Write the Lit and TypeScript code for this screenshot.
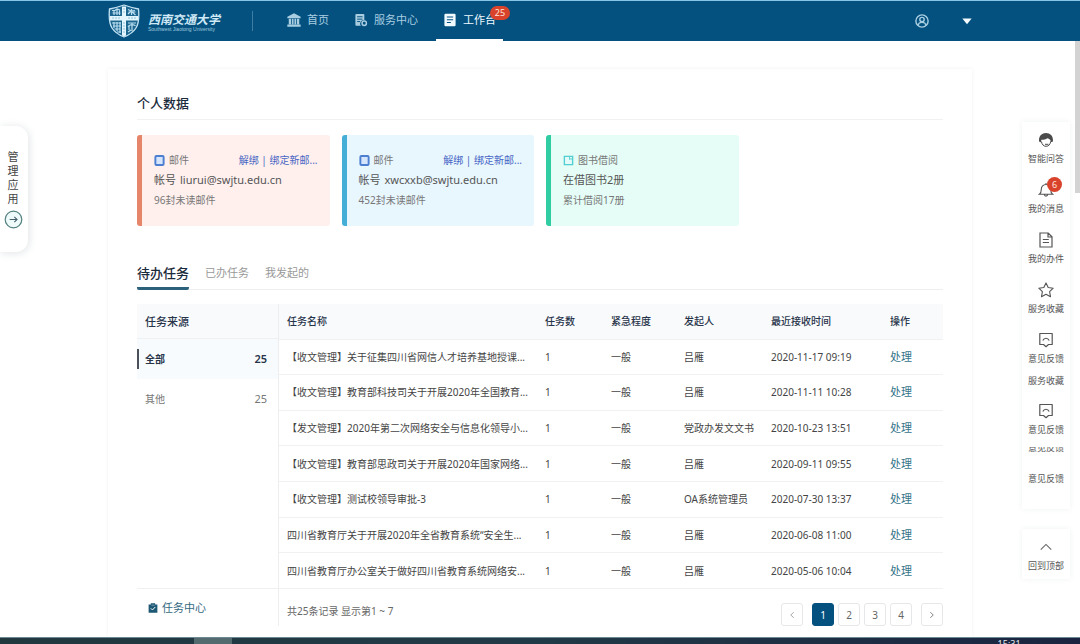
import { LitElement, html, css, svg } from "lit";
import { customElement, property, state } from "lit/decorators.js";
import { classMap } from "lit/directives/class-map.js";

const icons: Record<string, unknown> = {
  bank: svg`<g fill="currentColor"><path d="M8 .3 15.600 4.400V6H.4V4.400z"/><path d="M2 6.500h2.600v6.300H2zM5.500 6.500h2v6.300h-2zM8.500 6.500h2v6.300h-2zM11.400 6.500H14v6.300h-2.600zM.4 13.200h15.200v2.400H.4z"/></g>`,
  service: svg`<path fill="currentColor" d="M2.600 1h8.200q1 0 1 1v6.200a4 4 0 0 0-4 6.300H2.600q-1 0-1-1V2q0-1 1-1z"/><path stroke="#04517f" stroke-width="1.100" d="M3.600 4.300h6.200M3.600 7h6M3.600 9.800h3.400"/><circle cx="11.700" cy="11.700" r="2.500" fill="none" stroke="currentColor" stroke-width="1.700"/>`,
  desk: svg`<path fill="currentColor" d="M3 .8h10q1.400 0 1.400 1.400v11.600q0 1.400-1.400 1.400H3q-1.400 0-1.400-1.400V2.200Q1.600.8 3 .8z"/><path stroke="#04517f" stroke-width="1.200" d="M4.400 4.600h7.200M4.400 7.600h7.200M4.400 10.800h4.600"/>`,
  user: svg`<g fill="none" stroke="currentColor" stroke-width="1.600"><circle cx="8" cy="8" r="7"/><circle cx="8" cy="6.300" r="2.500"/><path d="M3.700 13.200c0-2.600 1.700-3.600 4.300-3.600s4.300 1 4.300 3.600"/></g>`,
  caret: svg`<path fill="currentColor" d="M.5 4h15L8 13z"/>`,
  mail: svg`<rect x="2" y="1.500" width="12" height="13" rx="1.500" fill="#d5e6fc" stroke="#4c7fd0" stroke-width="2.800"/>`,
  book: svg`<path d="M2 2h12v12H2z" fill="#e4fbfa" stroke="#52cfd0" stroke-width="2"/><path d="M9.500 2.500v4.200l2-1.400 2 1.400" fill="none" stroke="#52cfd0" stroke-width="1.300"/>`,
  arrow: svg`<circle cx="8" cy="8" r="7" fill="#effafa" stroke="#52807f" stroke-width="1"/><path d="M4.800 8h6M8.700 5.800 11 8l-2.300 2.200" fill="none" stroke="#44606a" stroke-width=".9"/>`,
  robot: svg`<path fill="#4b4b4b" d="M1 8.600C.8 3.700 4 .9 8 .9s7.200 2.800 7 7.700c-.1 1.400-1.200 1.800-2 1.300-.4-2-1.600-3.100-3.600-3.700-1.700 1.100-4 1.700-6 1.600l-.5 2.300C2 10.600 1.100 10 1 8.600z"/><path fill="none" stroke="#4b4b4b" stroke-width="1" d="M3.400 9.500c.5 3 2.200 4.800 4.600 4.800 2.600 0 4.400-1.900 4.700-5M7 12.300h3.400"/>`,
  bell: svg`<path fill="none" stroke="#555" stroke-width="1.100" d="M1.400 12.300h13.200c-1.500-1-1.900-2.300-1.900-5C12.700 4.500 10.800 2.500 8 2.500S3.300 4.500 3.300 7.300c0 2.700-.4 4-1.900 5zM6.300 12.500c.2 2.200 3.200 2.200 3.400 0M8 2.500V1"/>`,
  doc: svg`<path fill="none" stroke="#555" stroke-width="1.200" d="M2 1h8.200L14 4.800V15H2zM10 1v4h4M4.800 7.500h6M4.800 10.500h6.200"/>`,
  star: svg`<path fill="none" stroke="#555" stroke-width="1.100" stroke-linejoin="round" d="m8 .9 2.200 4.600 5 .7-3.600 3.500.9 5L8 12.300l-4.500 2.400.9-5L.8 6.200l5-.7z"/>`,
  feedback: svg`<path fill="none" stroke="#555" stroke-width="1.200" stroke-linejoin="round" d="M1.800 1.500h12.400v11h-3.700L8 14.700l-2.500-2.200H1.800zM4.800 8.500c1.500-3 4.900-3 6.400 0"/>`,
  up: svg`<path fill="none" stroke="#666" stroke-width="1.200" d="m2 11 6-6 6 6"/>`,
  clip: svg`<path fill="#1d5874" d="M1 2.500h3.500V.5h7v2H15v13H1z"/><path fill="none" stroke="#fff" stroke-width="1.600" d="m4.500 8.500 2.600 2.600 4.600-4.800"/><path stroke="#b8ccd6" stroke-width="1" d="M5.500 3.500h5"/>`,
  prev: svg`<path fill="none" stroke="#aaa" stroke-width="2" d="m11.500 2.500-6 5.500 6 5.500"/>`,
  next: svg`<path fill="none" stroke="#888" stroke-width="2" d="m4.500 2.500 6 5.500-6 5.500"/>`,
};

@customElement("ui-icon")
class UiIcon extends LitElement {
  static styles = css`
    :host { display: inline-flex; flex: none; width: 14px; height: 14px; }
    svg { display: block; width: 100%; height: 100%; }
  `;
  @property() name = "";
  render() {
    return html`<svg viewBox="0 0 16 16" aria-hidden="true">${icons[this.name]}</svg>`;
  }
}

@customElement("school-crest")
class SchoolCrest extends LitElement {
  static styles = css`
    :host { display: block; width: 32px; height: 34px; }
    svg { display: block; width: 100%; height: 100%; }
  `;
  render() {
    return html`<svg viewBox="0 0 32 34" aria-hidden="true">
      <path d="M1.500 5Q9 3.500 16 1q7 2.500 14.500 4c.8 8.500.5 14-2.500 19-2.500 4-7 7-12 9-5-2-9.500-5-12-9C1 19 .7 13.500 1.500 5z" fill="#1c6690" stroke="#c4e4f4" stroke-width="1.300"/>
      <path d="M14 2.500h4V12h12v4.500H18v15l-2 1-2-1v-15H2V12h12z" fill="#e3f5fc"/>
      <g fill="none" stroke="#b9def0" stroke-width="1.200">
        <path d="M4 6.500h3l2-1.500 3 1M4.500 9h8M6 6.500V11M9 5.500V11M11.500 6.500V11"/>
        <path d="M20 5.500l3 1.500 4-.5M20 10l3-3 4.500 4M20.500 8h7M23.500 5v6"/>
        <path d="M4 19h9M5 22h8M6.500 25h6M9 28h4M6 18v6M9 18v9M12 18v11"/>
        <path d="M20 19h8M24 19v8M20 23c2-3 6-3 7.500-1M20 28l3-2M21 21v5"/>
      </g>
      <path d="M4 14h8M20 14h8M16 4v6M16 18v11" stroke="#8fbfd8" stroke-width="1" stroke-dasharray="2 1"/>
    </svg>`;
  }
}

const cards = [
  { tone: "coral", icon: "mail", kind: "邮件", links: true, label: "帐号", account: "liurui@swjtu.edu.cn", note: "96封未读邮件" },
  { tone: "blue", icon: "mail", kind: "邮件", links: true, label: "帐号", account: "xwcxxb@swjtu.edu.cn", note: "452封未读邮件" },
  { tone: "green", icon: "book", kind: "图书借阅", links: false, label: "在借图书2册", account: "", note: "累计借阅17册" },
];

const tasks = [
  ["【收文管理】关于征集四川省网信人才培养基地授课...", "吕雁", "2020-11-17 09:19"],
  ["【收文管理】教育部科技司关于开展2020年全国教育...", "吕雁", "2020-11-11 10:28"],
  ["【发文管理】2020年第二次网络安全与信息化领导小...", "党政办发文文书", "2020-10-23 13:51"],
  ["【收文管理】教育部思政司关于开展2020年国家网络...", "吕雁", "2020-09-11 09:55"],
  ["【收文管理】测试校领导审批-3", "OA系统管理员", "2020-07-30 13:37"],
  ["四川省教育厅关于开展2020年全省教育系统“安全生...", "吕雁", "2020-06-08 11:00"],
  ["四川省教育厅办公室关于做好四川省教育系统网络安...", "吕雁", "2020-05-06 10:04"],
];

const tools = [
  ["robot", "智能问答", ""],
  ["bell", "我的消息", "6"],
  ["doc", "我的办件", ""],
  ["star", "服务收藏", ""],
  ["feedback", "意见反馈", ""],
];

@customElement("app-root")
class AppRoot extends LitElement {
  static styles = css`
    :host {
      display: flex; flex-direction: column; position: relative;
      height: 100vh; overflow: hidden; background: #fff; color: #444;
      font: 10px/20px "Noto Sans", "Noto Sans CJK SC", sans-serif;
    }
    * { box-sizing: border-box; }
    a { color: inherit; text-decoration: none; }
    button { font: inherit; color: inherit; background: none; border: 0; padding: 0; cursor: pointer; }
    h2, ul, p { margin: 0; padding: 0; list-style: none; font-weight: inherit; }

    .top {
      flex: none; display: flex; align-items: center; height: 41px; padding: 0 10%;
      background: #04517f; border-top: 1px solid #86c5e6; color: #a9cee2;
    }
    .brand { display: flex; align-items: center; gap: 8px; padding-right: 32px; }
    .names { display: flex; flex-direction: column; color: #cfe9f6; white-space: nowrap; }
    .school { font: italic 700 12px/15px "Noto Sans CJK SC", sans-serif; }
    .english { font: 5px/6px "Liberation Sans", sans-serif; color: #9fc9df; }
    .rule { width: 1px; height: 20px; background: #3c7ea4; }
    .nav { display: flex; gap: 11px; height: 100%; margin-left: 27px; flex: 1; }
    .nav a {
      display: flex; align-items: center; gap: 6px; padding: 0 7px; font-size: 11px;
      border-bottom: 2px solid transparent; position: relative; white-space: nowrap;
    }
    .nav a.on { color: #f0faff; border-bottom-color: #fff; }
    .badge {
      position: absolute; display: flex; align-items: center; justify-content: center;
      background: #d9432c; color: #ffe3dc; border-radius: 8px;
    }
    .nav .badge { left: 54px; top: 5px; width: 20px; height: 14px; font-size: 9px; }
    .account { display: flex; align-items: center; gap: 33px; }
    .account button { display: flex; }
    .caret { width: 10px; height: 10px; color: #f4fcff; }

    .page { flex: 1; min-height: 0; overflow: hidden; padding: 28px 10% 0; }
    .panel { min-height: 100%; padding: 24px 29px 0; box-shadow: 0 0 4px #f0f1f3; }
    .title {
      font-size: 13px; font-weight: 500; color: #1c2b3c; padding-bottom: 6px;
      border-bottom: 1px solid #f0f1f2; font-family: "Noto Sans CJK SC", sans-serif;
    }
    .cards { display: grid; grid-template-columns: repeat(4, 1fr); gap: 12px; margin-top: 15px; }
    .card { padding: 15px 12px 16px; border-left: 5px solid; border-radius: 3px; min-width: 0; color: #777; }
    .card.coral { border-color: #e58569; background: #fff0ed; }
    .card.blue { border-color: #45aed6; background: #e8f6fe; }
    .card.green { border-color: #30cda2; background: #e5fdf6; }
    .head { display: flex; align-items: center; gap: 4px; }
    .head ui-icon { width: 11px; height: 11px; }
    .links { margin-left: auto; color: #4665c4; }
    .main { display: flex; gap: 4px; font-size: 11px; color: #555; white-space: nowrap; }

    .tabs { display: flex; align-items: stretch; gap: 16px; margin-top: 32px; border-bottom: 1px solid #eceeef; }
    .tabs button { font-size: 11px; line-height: 30px; height: 32px; color: #999; border-bottom: 3px solid transparent; margin-bottom: -1px; }
    .tabs button.on { font-size: 13px; font-weight: 500; color: #1c2b3c; border-bottom-color: #2c617c; border-radius: 2px; font-family: "Noto Sans CJK SC", sans-serif; }

    .board { display: grid; grid-template-columns: 142px minmax(0, 1fr); margin-top: 14px; }
    .sources { display: flex; flex-direction: column; border-right: 1px solid #eceef0; }
    .strong { font-family: "Noto Sans CJK SC", sans-serif; font-weight: 500; color: #28344a; }
    .sources .strong { font-size: 11px; line-height: 34px; padding-left: 8px; background: #f8fafc; border-bottom: 1px solid #eef0f2; }
    .source { display: flex; justify-content: space-between; align-items: center; height: 40px; padding: 0 11px 0 8px; color: #777; width: 100%; }
    .source span:last-child { font-size: 11px; }
    .source.on { position: relative; background: #f8fbfd; font-weight: 600; color: #28344a; }
    .source.on::before { content: ""; position: absolute; left: 0; top: 10px; width: 2px; height: 20px; background: #4a5158; }
    .center { display: flex; align-items: center; gap: 4px; margin-top: auto; height: 38px; padding-left: 11px; border-top: 1px solid #eef0f1; font-size: 11px; color: #34697f; }
    .center ui-icon { width: 10px; height: 10px; }

    table { width: 100%; height: 285px; table-layout: fixed; border-collapse: collapse; }
    th, td { padding: 0 0 0 8px; text-align: left; border-bottom: 1px solid #f0f1f3; white-space: nowrap; font-weight: 400; }
    th { height: 35px; background: #f8fafc; }
    th.strong { font-weight: 500; }
    .count { width: 66px; } .level { width: 73px; } .from { width: 87px; } .time { width: 119px; } .act { width: 61px; }
    .act a { font-size: 11px; color: #35758a; }
    .foot { display: flex; align-items: center; justify-content: space-between; padding: 14px 0 0 8px; color: #666; }
    .foot p { margin-top: -8px; }
    .pager { display: flex; gap: 4px; }
    .pager button { display: flex; align-items: center; justify-content: center; width: 22px; height: 23px; border: 1px solid #e6e7e9; border-radius: 3px; background: #fff; color: #666; }
    .pager ui-icon { width: 8px; height: 8px; }
    .pager .prev { margin-right: 5px; }
    .pager .next { margin-left: 5px; }
    .pager .on { background: #04517f; border-color: #04517f; color: #fff; }

    .drawer {
      position: absolute; left: 0; top: 126px; width: 28px; padding: 24px 2px 23px 0;
      display: flex; flex-direction: column; align-items: center; gap: 4px;
      background: #fff; border-radius: 0 12px 12px 0; box-shadow: 1px 1px 8px #dfe3e6;
      font-size: 11px; line-height: 14px; color: #444;
    }
    .drawer span { width: 11px; white-space: normal; word-break: break-all; }
    .drawer ui-icon { width: 19px; height: 19px; }
    .rail { position: absolute; right: 10px; top: 122px; width: 48px; display: flex; flex-direction: column; font-size: 9px; line-height: 12px; color: #555; }
    .group { padding-bottom: 18px; box-shadow: 0 0 6px #eff1f2; background: #fff; display: flex; flex-direction: column; }
    .tool { position: relative; display: flex; flex-direction: column; align-items: center; gap: 5px; width: 100%; height: 50px; padding-top: 10px; white-space: nowrap; }
    .tool ui-icon { width: 16px; height: 16px; }
    .tool .badge { left: 25px; top: 5px; width: 15px; height: 15px; font-size: 9px; }
    .echo { display: flex; justify-content: center; padding: 3px 0 6px; }
    .sliver { display: flex; align-items: flex-end; justify-content: center; height: 7px; margin: 4px 0 16px; overflow: hidden; }
    .back { margin-top: 20px; background: #fff; box-shadow: 0 0 6px #eff1f2; }
    .back ui-icon { width: 14px; }
    .scroll { position: absolute; right: 0; top: 41px; width: 5px; height: 152px; background: #d3d3d3; }
    .taskbar {
      flex: none; display: flex; justify-content: space-between; height: 7px; padding: 0 5.5% 0 18%;
      overflow: hidden; border-top: 1px solid #6d8a92; color: #e6eaf2; font-size: 9px; line-height: 12px;
      background: linear-gradient(90deg, #21383f, #213a47 50%, #1a2440);
    }
    .window { width: 38px; background: #536a6e; }
  `;

  @state() private tab = 0;
  @state() private source = 0;
  @state() private current = 1;

  private tool(icon: string, label: string, count = "") {
    return html`<button class="tool"><ui-icon name=${icon}></ui-icon><span>${label}</span>${count ? html`<span class="badge">${count}</span>` : ""}</button>`;
  }

  render() {
    return html`
      <header class="top">
        <div class="brand">
          <school-crest></school-crest>
          <div class="names"><span class="school">西南交通大学</span><span class="english">Southwest Jiaotong University</span></div>
        </div>
        <div class="rule"></div>
        <nav class="nav">
          <a href="#home"><ui-icon name="bank"></ui-icon>首页</a>
          <a href="#service"><ui-icon name="service"></ui-icon>服务中心</a>
          <a href="#desk" class="on"><ui-icon name="desk"></ui-icon>工作台<span class="badge">25</span></a>
        </nav>
        <div class="account">
          <button aria-label="用户"><ui-icon name="user"></ui-icon></button>
          <button aria-label="菜单"><ui-icon class="caret" name="caret"></ui-icon></button>
        </div>
      </header>

      <main class="page">
        <div class="panel">
          <h2 class="title">个人数据</h2>
          <section class="cards">
            ${cards.map((c) => html`
              <article class="card ${c.tone}">
                <div class="head"><ui-icon name=${c.icon}></ui-icon><span>${c.kind}</span>
                  ${c.links ? html`<span class="links"><a href="#unbind">解绑</a> | <a href="#bind">绑定新邮...</a></span>` : ""}
                </div>
                <p class="main"><span>${c.label}</span><span>${c.account}</span></p>
                <p>${c.note}</p>
              </article>`)}
          </section>

          <nav class="tabs">
            ${["待办任务", "已办任务", "我发起的"].map((t, i) => html`
              <button class=${classMap({ on: i === this.tab })} @click=${() => (this.tab = i)}>${t}</button>`)}
          </nav>

          <section class="board">
            <div class="sources">
              <div class="strong">任务来源</div>
              ${["全部", "其他"].map((s, i) => html`
                <button class=${classMap({ source: true, on: i === this.source })} @click=${() => (this.source = i)}><span>${s}</span><span>25</span></button>`)}
              <a class="center" href="#tasks"><ui-icon name="clip"></ui-icon>任务中心</a>
            </div>
            <div>
              <table>
                <thead><tr>
                  <th class="strong">任务名称</th><th class="strong count">任务数</th><th class="strong level">紧急程度</th>
                  <th class="strong from">发起人</th><th class="strong time">最近接收时间</th><th class="strong act">操作</th>
                </tr></thead>
                <tbody>
                  ${tasks.map(([name, from, time]) => html`
                    <tr><td>${name}</td><td>1</td><td>一般</td><td>${from}</td><td>${time}</td><td class="act"><a href="#handle">处理</a></td></tr>`)}
                </tbody>
              </table>
              <div class="foot">
                <p>共25条记录 显示第1 ~ 7</p>
                <div class="pager">
                  <button class="prev" aria-label="上一页" @click=${() => (this.current = Math.max(1, this.current - 1))}><ui-icon name="prev"></ui-icon></button>
                  ${[1, 2, 3, 4].map((n) => html`<button class=${classMap({ on: n === this.current })} @click=${() => (this.current = n)}>${n}</button>`)}
                  <button class="next" aria-label="下一页" @click=${() => (this.current = Math.min(4, this.current + 1))}><ui-icon name="next"></ui-icon></button>
                </div>
              </div>
            </div>
          </section>
        </div>
      </main>

      <button class="drawer"><span>管理应用</span><ui-icon name="arrow"></ui-icon></button>
      <aside class="rail">
        <div class="group">
          ${tools.map(([icon, label, count]) => this.tool(icon, label, count))}
          <span class="echo">服务收藏</span>
          ${this.tool("feedback", "意见反馈")}
          <span class="sliver">意见反馈</span>
          <span class="echo">意见反馈</span>
        </div>
        <div class="back">${this.tool("up", "回到顶部")}</div>
      </aside>
      <div class="scroll"></div>
      <footer class="taskbar"><span class="window"></span><span>15:31</span></footer>
    `;
  }
}
